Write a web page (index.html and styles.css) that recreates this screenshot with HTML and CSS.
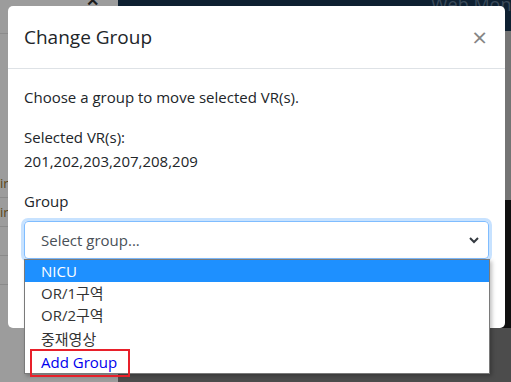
FILE: index.html
```html
<!DOCTYPE html>
<html lang="ko">
<head>
    <meta charset="UTF-8">
    <meta name="viewport" content="width=device-width, initial-scale=1.0">
    <title>Change Group</title>
    <link rel="stylesheet" href="styles.css">
</head>
<body>
    <!-- Pagina de fondo (oscurecida por el modal) -->
    <div class="page">
        <aside class="sidebar">
            <div class="side-top"><span class="side-icon">✕</span></div>
            <div class="side-gap"></div>
            <div class="side-row"><span>ir</span></div>
            <div class="side-row"><span>ir</span></div>
            <div class="side-row"></div>
            <div class="side-row"></div>
        </aside>
        <main class="main">
            <header class="topbar"><span class="brand">Web Monitoring</span></header>
            <div class="main-area"></div>
            <div class="main-dark"></div>
            <div class="main-foot"></div>
        </main>
    </div>

    <!-- Modal -->
    <div class="modal">
        <div class="modal-header">
            <h5 class="modal-title">Change Group</h5>
            <span class="close">&times;</span>
        </div>
        <div class="modal-body">
            <p>Choose a group to move selected VR(s).</p>
            <p>Selected VR(s):<br>201,202,203,207,208,209</p>
            <label class="label">Group</label>
            <div class="select">
                <span>Select group...</span>
                <svg class="chevron" width="10" height="7" viewBox="0 0 10 7">
                    <polyline points="1,1 5,5 9,1" fill="none" stroke="#343a40" stroke-width="2"/>
                </svg>
            </div>
        </div>
    </div>

    <!-- Lista desplegable abierta -->
    <ul class="dropdown">
        <li class="opt active">NICU</li>
        <li class="opt">OR/1구역</li>
        <li class="opt">OR/2구역</li>
        <li class="opt tall">중재영상</li>
        <li class="opt add">Add Group</li>
    </ul>
    <div class="mark"></div>
</body>
</html>
```

FILE: styles.css
```css
html, body {
    margin: 0;
    height: 100%;
    overflow: hidden;
}
body {
    font-family: "Open Sans", "Noto Sans CJK KR", sans-serif;
    background-color: #4c4c4c;
    color: #212529;
}
.page {
    display: grid;
    grid-template-columns: 118px 1fr;
    height: 382px;
}
/* Fondo izquierdo */
.sidebar {
    background-color: #9c9c9c;
    display: flex;
    flex-direction: column;
}
.side-top {
    height: 33px;
    border-bottom: 1px solid #8c8c8c;
    position: relative;
}
.side-icon {
    position: absolute;
    left: 86px;
    top: -11px;
    font-size: 16px;
    font-weight: bold;
    color: #1c1c1c;
}
.side-gap {
    height: 135px;
}
.side-row {
    height: 28px;
    border-bottom: 1px solid #8a8a8a;
    font-size: 13px;
    line-height: 28px;
    color: #5a4516;
    overflow: hidden;
}
/* Fondo derecho */
.main {
    display: flex;
    flex-direction: column;
}
.topbar {
    height: 31px;
    background-color: #0e2031;
    overflow: hidden;
    position: relative;
}
.brand {
    position: absolute;
    left: 313px;
    top: -8px;
    font-size: 18px;
    color: #3a4a5a;
    white-space: nowrap;
}
.main-area {
    height: 169px;
    background-color: #747474;
}
.main-dark {
    height: 128px;
    background-color: #101010;
}
.main-foot {
    flex: 1;
    background-color: #4c4c4c;
}
/* Modal */
.modal {
    position: absolute;
    left: 8px;
    top: 6px;
    width: 497px;
    height: 322px;
    background-color: #fff;
    border-radius: 5px;
    box-sizing: border-box;
}
.modal-header {
    display: flex;
    align-items: center;
    justify-content: space-between;
    padding: 16px;
    border-bottom: 1px solid #dee2e6;
}
.modal-title {
    margin: 0;
    font-size: 19px;
    font-weight: 500;
    line-height: 30px;
    color: #212529;
}
.close {
    font-size: 26px;
    font-weight: normal;
    line-height: 30px;
    color: #858585;
    margin-right: 2px;
}
.modal-body {
    padding: 16px;
    font-size: 15px;
    line-height: 24px;
}
.modal-body p {
    margin: 0 0 16px;
}
.label {
    display: block;
    margin-bottom: 8px;
}
.select {
    display: flex;
    align-items: center;
    justify-content: space-between;
    height: 38px;
    box-sizing: border-box;
    padding: 0 8px 0 16px;
    border: 1px solid #80bdff;
    border-radius: 4px;
    box-shadow: 0 0 0 3px rgba(0, 123, 255, 0.22);
    color: #495057;
}
.chevron {
    margin-right: 1px;
}
/* Desplegable */
.dropdown {
    position: absolute;
    left: 24px;
    top: 259px;
    width: 466px;
    box-sizing: border-box;
    margin: 0;
    padding: 0;
    list-style: none;
    background-color: #fff;
    border: 1px solid #7a7a7a;
    box-shadow: 2px 2px 4px rgba(0, 0, 0, 0.25);
    font-size: 15px;
}
.opt {
    height: 22px;
    line-height: 22px;
    padding-left: 16px;
    color: #333;
}
.opt.active {
    background-color: #1e90ff;
    color: #fff;
}
.opt.tall {
    height: 25px;
    line-height: 27px;
}
.opt.add {
    color: #0000ee;
}
.mark {
    position: absolute;
    left: 30px;
    top: 349px;
    width: 100px;
    height: 28px;
    box-sizing: border-box;
    border: 2px solid #e8202a;
}
```
